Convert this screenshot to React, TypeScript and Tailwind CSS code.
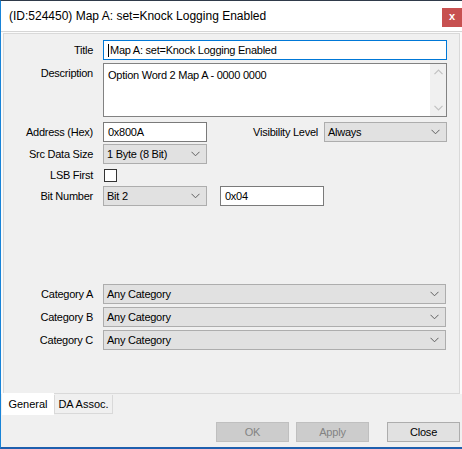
import React from "react";

const Chevron = () => (
  <svg width="9" height="6" viewBox="0 0 9 6" className="shrink-0">
    <polyline points="0.5,0.8 4.5,4.8 8.5,0.8" fill="none" stroke="#5f5f5f" strokeWidth="1" />
  </svg>
);

const Select = ({ value, w }: { value: string; w: string }) => (
  <div
    className={`${w} h-[20px] flex items-center justify-between bg-[#e1e1e1] border border-[#adadad] pl-[3px] pr-[6px] text-black`}
  >
    <span>{value}</span>
    <Chevron />
  </div>
);

const Input = ({ value, w, focused }: { value: string; w: string; focused?: boolean }) => (
  <div
    className={`${w} h-[20px] flex items-center bg-white border ${
      focused ? "border-[#0078d7]" : "border-[#7a7a7a]"
    } pl-[4px] text-black`}
  >
    {focused && <span className="w-px h-[13px] bg-black mr-px" />}
    <span>{value}</span>
  </div>
);

const Label = ({ children }: { children: React.ReactNode }) => (
  <div className="w-[89px] text-right pr-0 shrink-0">{children}</div>
);

export default function App() {
  return (
    <div
      className="w-[462px] h-[449px] bg-[#f0f0f0] flex flex-col border-l border-l-[#1883d7] border-t border-t-[#2f3a4a] border-b-2 border-b-[#1f5fae] overflow-hidden text-[11px] text-black"
      style={{ fontFamily: '"Liberation Sans", Arial, sans-serif' }}
    >
      {/* Title bar */}
      <div className="h-[30px] shrink-0 bg-white flex items-start relative">
        <div className="pl-[8px] pt-[7px] text-[12px] leading-[16px]">
          (ID:524450) Map A: set=Knock Logging Enabled
        </div>
        <div className="absolute right-[0px] top-[7px] w-[20px] h-[19px] bg-[#c75050] flex items-center justify-center text-white text-[11px] font-bold leading-none pb-[2px]">
          x
        </div>
      </div>
      <div className="h-px bg-[#d5d5d5] shrink-0" />

      {/* Tab control */}
      <div className="bg-[#fbfbfb] pt-px pl-[2px] pr-[2px] flex flex-col">
        <div className="h-[361px] bg-[#f0f0f0] border border-[#d9d9d9] flex flex-col tracking-[-0.25px]">
          {/* Title */}
          <div className="flex items-center mt-[6px] h-[20px]">
            <Label>Title</Label>
            <div className="ml-[10px]">
              <Input value="Map A: set=Knock Logging Enabled" w="w-[344px]" focused />
            </div>
          </div>
          {/* Description */}
          <div className="flex items-start mt-[3px] h-[54px]">
            <div className="w-[89px] text-right shrink-0 pt-[2px]">Description</div>
            <div className="ml-[10px] w-[344px] h-[54px] bg-white border border-[#828282] flex">
              <div className="flex-1 pl-[4px] pt-[3px]">Option Word 2 Map A - 0000 0000</div>
              <div className="w-[16px] bg-[#f0f0f0] flex flex-col items-center justify-between py-[5px]">
                <svg width="9" height="6" viewBox="0 0 9 6">
                  <polyline points="0.5,5.2 4.5,1.2 8.5,5.2" fill="none" stroke="#c2c2c2" strokeWidth="1.2" />
                </svg>
                <svg width="9" height="6" viewBox="0 0 9 6">
                  <polyline points="0.5,0.8 4.5,4.8 8.5,0.8" fill="none" stroke="#c2c2c2" strokeWidth="1.2" />
                </svg>
              </div>
            </div>
          </div>
          {/* Address */}
          <div className="flex items-center mt-[5px] h-[20px]">
            <Label>Address (Hex)</Label>
            <div className="ml-[10px]">
              <Input value="0x800A" w="w-[104px]" />
            </div>
            <div className="flex-1 text-right pr-[6px]">Visibility Level</div>
            <Select value="Always" w="w-[123px]" />
            <div className="w-[12px]" />
          </div>
          {/* Src Data Size */}
          <div className="flex items-center mt-[2px] h-[20px]">
            <Label>Src Data Size</Label>
            <div className="ml-[10px]">
              <Select value="1 Byte (8 Bit)" w="w-[104px]" />
            </div>
          </div>
          {/* LSB First */}
          <div className="flex items-center mt-[5px] h-[13px]">
            <Label>LSB First</Label>
            <div className="ml-[11px] w-[13px] h-[13px] bg-white border border-[#333333]" />
          </div>
          {/* Bit Number */}
          <div className="flex items-center mt-[4px] h-[20px]">
            <Label>Bit Number</Label>
            <div className="ml-[10px]">
              <Select value="Bit 2" w="w-[104px]" />
            </div>
            <div className="ml-[13px]">
              <Input value="0x04" w="w-[104px]" />
            </div>
          </div>
          {/* Categories */}
          <div className="flex items-center mt-[78px] h-[20px]">
            <Label>Category A</Label>
            <div className="ml-[10px]">
              <Select value="Any Category" w="w-[343px]" />
            </div>
          </div>
          <div className="flex items-center mt-[3px] h-[20px]">
            <Label>Category B</Label>
            <div className="ml-[10px]">
              <Select value="Any Category" w="w-[343px]" />
            </div>
          </div>
          <div className="flex items-center mt-[3px] h-[20px]">
            <Label>Category C</Label>
            <div className="ml-[10px]">
              <Select value="Any Category" w="w-[343px]" />
            </div>
          </div>
        </div>
      </div>

      {/* Tabs */}
      <div className="flex items-start h-[22px] -mt-px relative">
        <div className="ml-[1px] w-[52px] h-[22px] bg-white flex items-center justify-center pt-[1px] text-[11px]">
          General
        </div>
        <div className="mt-[2px] w-[59px] h-[19px] bg-[#f0f0f0] border border-t-0 border-[#d9d9d9] flex items-center justify-center text-[11px]">
          DA Assoc.
        </div>
      </div>

      {/* Buttons */}
      <div className="flex items-center mt-[7px] h-[20px] tracking-[-0.2px]">
        <div className="flex-1" />
        <div className="w-[73px] h-[20px] bg-[#cccccc] border border-[#bfbfbf] flex items-center justify-center text-[#838383]">
          OK
        </div>
        <div className="ml-[7px] w-[73px] h-[20px] bg-[#cccccc] border border-[#bfbfbf] flex items-center justify-center text-[#838383]">
          Apply
        </div>
        <div className="ml-[18px] mr-[2px] w-[73px] h-[20px] bg-[#e1e1e1] border border-[#adadad] flex items-center justify-center">
          Close
        </div>
      </div>
    </div>
  );
}
